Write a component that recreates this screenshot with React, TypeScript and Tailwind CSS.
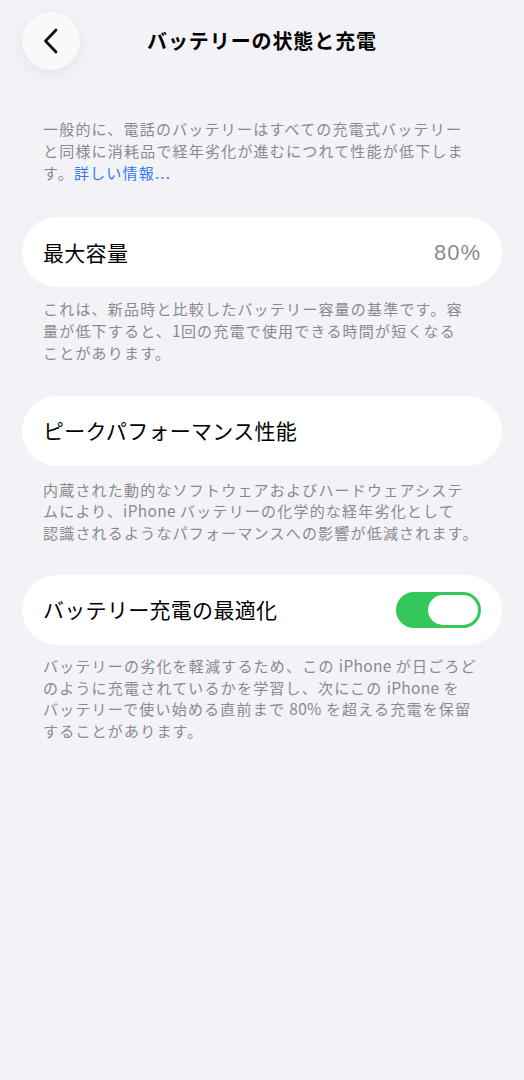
import React from "react";

const font = { fontFamily: '"Noto Sans CJK JP", "Noto Sans", sans-serif' };

function Desc({ children, className = "" }: { children: React.ReactNode; className?: string }) {
  return (
    <p className={`pl-[43px] pr-[10px] text-[15px] leading-[21.75px] text-[#8a8a8e] tracking-[1.2px] whitespace-nowrap ${className}`}>
      {children}
    </p>
  );
}

function L({ children }: { children: React.ReactNode }) {
  return <span className="tracking-[0.3px] text-[15.5px]">{children}</span>;
}

const T = "\u2009";

export default function App() {
  return (
    <div style={font} className="min-h-[1080px] w-[524px] bg-[#f2f2f7] overflow-hidden">
      <header className="grid grid-cols-[100px_1fr_100px] items-center pt-[12px]">
        <div className="pl-[22px]">
          <button className="w-[58px] h-[58px] rounded-full bg-[#f9f9fb] shadow-[0_4px_16px_rgba(0,0,0,0.06)] flex items-center justify-center">
            <svg width="18" height="26" viewBox="0 0 18 26" fill="none">
              <path d="M14 2 L3.5 13 L14 24" stroke="#111" strokeWidth="2.8" strokeLinecap="round" strokeLinejoin="round" />
            </svg>
          </button>
        </div>
        <h1 className="text-center text-[20px] font-bold text-black tracking-[0.9px] whitespace-nowrap">
          バッテリーの状態と充電
        </h1>
        <div />
      </header>

      <Desc className="mt-[48px]">
        一般的に、電話のバッテリーはすべての充電式バッテリー
        <br />
        と同様に消耗品で経年劣化が進むにつれて性能が低下しま
        <br />
        す。<span className="text-[#3478f6]">詳しい情報...</span>
      </Desc>

      <div className="mx-[22px] mt-[34px] h-[70px] rounded-full bg-white flex items-center justify-between pl-[21px] pr-[21px]">
        <span className="text-[21px] text-black tracking-[0.3px]">最大容量</span>
        <span
          className="text-[22px] text-[#8a8a8e] tracking-[1px]"
          style={{ fontFamily: '"Liberation Sans", "Noto Sans", sans-serif' }}
        >
          80%
        </span>
      </div>
      <Desc className="mt-[11px]">
        これは、新品時と比較したバッテリー容量の基準です。容
        <br />
        量が低下すると、<L>1</L>回の充電で使用できる時間が短くなる
        <br />
        ことがあります。
      </Desc>

      <div className="mx-[22px] mt-[32px] h-[70px] rounded-full bg-white flex items-center pl-[21px]">
        <span className="text-[21px] text-black tracking-[0.3px]">ピークパフォーマンス性能</span>
      </div>
      <Desc className="mt-[13px]">
        内蔵された動的なソフトウェアおよびハードウェアシステ
        <br />
        ムにより、<L>iPhone</L>{T}バッテリーの化学的な経年劣化として
        <br />
        認識されるようなパフォーマンスへの影響が低減されます。
      </Desc>

      <div className="mx-[22px] mt-[31px] h-[70px] rounded-full bg-white flex items-center justify-between pl-[21px] pr-[21px]">
        <span className="text-[21px] text-black tracking-[0.3px]">バッテリー充電の最適化</span>
        <div className="w-[85px] h-[36px] rounded-full bg-[#34c759] p-[3px] flex justify-end">
          <div className="w-[50px] h-full rounded-full bg-white" />
        </div>
      </div>
      <Desc className="mt-[10px]">
        バッテリーの劣化を軽減するため、この{T}<L>iPhone</L>{T}が日ごろど
        <br />
        のように充電されているかを学習し、次にこの{T}<L>iPhone</L>{T}を
        <br />
        バッテリーで使い始める直前まで{T}<L>80%</L>{T}を超える充電を保留
        <br />
        することがあります。
      </Desc>
    </div>
  );
}
